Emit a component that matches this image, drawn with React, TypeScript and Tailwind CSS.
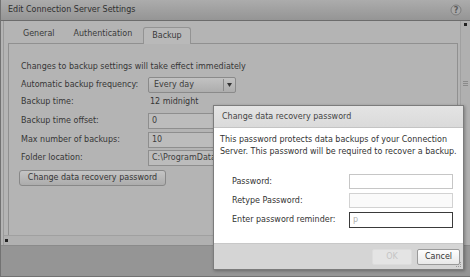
import React from "react";

function HelpIcon() {
  return (
    <svg width="12" height="12" viewBox="0 0 12 12">
      <circle cx="6" cy="6" r="5" fill="#a9a9a9" stroke="#7d7d7d" strokeWidth="1" />
      <text x="6" y="9" textAnchor="middle" fontSize="8" fontFamily="DejaVu Sans, sans-serif" fill="#5a5a5a" fontWeight="bold">?</text>
    </svg>
  );
}

function Field({ value }: { value: string }) {
  return (
    <div className="h-[16px] w-[150px] border border-[#8e8e8e] bg-[#bcbcbc] flex items-center pl-[3px] text-[#3c3c3c] whitespace-nowrap">
      {value}
    </div>
  );
}

export default function App() {
  return (
    <div className="relative w-[470px] h-[277px] overflow-hidden bg-[#8c8c8c] font-['DejaVu_Sans',sans-serif] text-[8px] text-[#363636]">
      {/* Outer (dimmed) dialog */}
      <div className="flex flex-col w-full h-full border-l border-b border-[#727272]">
        {/* title bar */}
        <div className="h-[21px] shrink-0 flex items-center justify-between pl-[7px] pr-[8px] bg-gradient-to-b from-[#acacac] to-[#959595] border-b border-[#6c6c6c] text-[#2f2f2f] text-[8px]">
          <span>Edit Connection Server Settings</span>
          <HelpIcon />
        </div>
        {/* body */}
        <div className="h-[224px] shrink-0 flex bg-[#b4b4b4]">
          <div className="flex-1 flex flex-col border-l border-[#9a9a9a] ml-[2px]">
            {/* tabs */}
            <div className="h-[22px] flex items-end pl-[4px]">
              <div className="flex items-end h-full">
                <span className="ml-[15px] mb-[3px] text-[#3a3a3a]">General</span>
                <span className="ml-[19px] mb-[3px] text-[#3a3a3a]">Authentication</span>
                <div className="ml-[11px] h-[17px] px-[8px] flex items-center border border-b-0 border-[#939393] rounded-t-[3px] bg-[#b9b9b9] text-[#3a3a3a] relative top-[1px]">
                  Backup
                </div>
              </div>
            </div>
            {/* panel */}
            <div className="flex-1 ml-[4px] mr-[2px] border border-[#909090] border-b-0 flex flex-col pl-[12px] pt-[17px]">
              <div className="h-[12px] leading-[12px] whitespace-nowrap">Changes to backup settings will take effect immediately</div>
              <div className="mt-[4px] h-[16px] flex items-center">
                <span className="w-[127px]">Automatic backup frequency:</span>
                <div className="h-[16px] w-[88px] border border-[#8a8a8a] rounded-[2px] bg-gradient-to-b from-[#c2c2c2] to-[#adadad] flex items-center">
                  <span className="flex-1 pl-[5px] text-[#3c3c3c]">Every day</span>
                  <div className="w-[12px] h-[12px] border-l border-[#8a8a8a] flex items-center justify-center">
                    <svg width="5" height="4" viewBox="0 0 5 4"><path d="M0 0 L5 0 L2.5 4 Z" fill="#333" /></svg>
                  </div>
                </div>
              </div>
              <div className="mt-[1px] h-[16px] flex items-center">
                <span className="w-[129px]">Backup time:</span>
                <span>12 midnight</span>
              </div>
              <div className="mt-[3px] h-[16px] flex items-center">
                <span className="w-[127px]">Backup time offset:</span>
                <Field value="0" />
              </div>
              <div className="mt-[3px] h-[16px] flex items-center">
                <span className="w-[127px]">Max number of backups:</span>
                <Field value="10" />
              </div>
              <div className="mt-[2px] h-[16px] flex items-center">
                <span className="w-[127px]">Folder location:</span>
                <Field value="C:\ProgramData\VMware\VDM" />
              </div>
              <div className="mt-[4px] -ml-[2px] h-[16px] w-[147px] border border-[#888888] rounded-[3px] bg-gradient-to-b from-[#c4c4c4] to-[#acacac] flex items-center justify-center text-[#363636]">
                Change data recovery password
              </div>
            </div>
            {/* horizontal scrollbar */}
            <div className="h-[10px] border-t border-[#a0a0a0] bg-[#b0b0b0] flex items-center pl-[1px]">
              <div className="w-[3px] h-[3px] bg-[#222]" />
            </div>
          </div>
          {/* vertical scrollbar */}
          <div className="w-[10px] border-l border-[#a0a0a0] bg-[#b0b0b0] flex flex-col items-center pt-[2px]">
            <div className="w-[3px] h-[3px] bg-[#222]" />
            <div className="mt-[55px] flex flex-col gap-[1px]">
              <div className="w-[5px] h-[1px] bg-[#8a8a8a]" />
              <div className="w-[5px] h-[1px] bg-[#8a8a8a]" />
              <div className="w-[5px] h-[1px] bg-[#8a8a8a]" />
            </div>
          </div>
        </div>
        {/* footer */}
        <div className="flex-1 bg-[#959595] border-t border-[#8a8a8a]" />
      </div>

      {/* Modal */}
      <div className="absolute left-[213px] top-[105px] w-[251px] h-[165px] border border-[#7c7c7c] bg-white flex flex-col shadow-[1px_1px_3px_rgba(0,0,0,0.3)]">
        <div className="h-[22px] shrink-0 flex items-center pl-[8px] bg-gradient-to-b from-[#e4e4e4] to-[#dadada] border-b border-[#c4c4c4] text-[#444] text-[8px]">
          Change data recovery password
        </div>
        <div className="flex-1 flex flex-col pl-[6px] pt-[6px] text-[#333]">
          <div className="leading-[12px]">
            This password protects data backups of your Connection
            <br />
            Server. This password will be required to recover a backup.
          </div>
          <div className="mt-[16px] flex flex-col gap-[4px] pl-[12px]">
            <div className="h-[15px] flex items-center">
              <span className="w-[117px]">Password:</span>
              <div className="w-[104px] h-[15px] border border-[#c6c6c6] bg-white" />
            </div>
            <div className="h-[15px] flex items-center">
              <span className="w-[117px]">Retype Password:</span>
              <div className="w-[104px] h-[15px] border border-[#d2d2d2] bg-[#fafafa]" />
            </div>
            <div className="h-[16px] flex items-center">
              <span className="w-[117px]">Enter password reminder:</span>
              <div className="w-[104px] h-[16px] border border-[#3a3a3a] bg-white flex items-center pl-[3px] text-[#b0b0b0]">p</div>
            </div>
          </div>
        </div>
        <div className="h-[26px] shrink-0 bg-[#d5d5d5] border-t border-[#c8c8c8] flex items-center justify-end gap-[5px] pr-[3px] relative">
          <div className="w-[40px] h-[16px] rounded-[2px] border border-[#dcdcdc] bg-[#e4e4e4] flex items-center justify-center text-[#c4c4c4]">OK</div>
          <div className="w-[43px] h-[16px] rounded-[2px] border border-[#9a9a9a] bg-gradient-to-b from-[#fdfdfd] to-[#e8e8e8] flex items-center justify-center text-[#333]">Cancel</div>
          <svg className="absolute right-[1px] bottom-[1px]" width="6" height="6" viewBox="0 0 6 6">
            <rect x="4" y="0" width="1" height="1" fill="#999" />
            <rect x="2" y="2" width="1" height="1" fill="#999" />
            <rect x="4" y="2" width="1" height="1" fill="#999" />
            <rect x="0" y="4" width="1" height="1" fill="#999" />
            <rect x="2" y="4" width="1" height="1" fill="#999" />
            <rect x="4" y="4" width="1" height="1" fill="#999" />
          </svg>
        </div>
      </div>
    </div>
  );
}
